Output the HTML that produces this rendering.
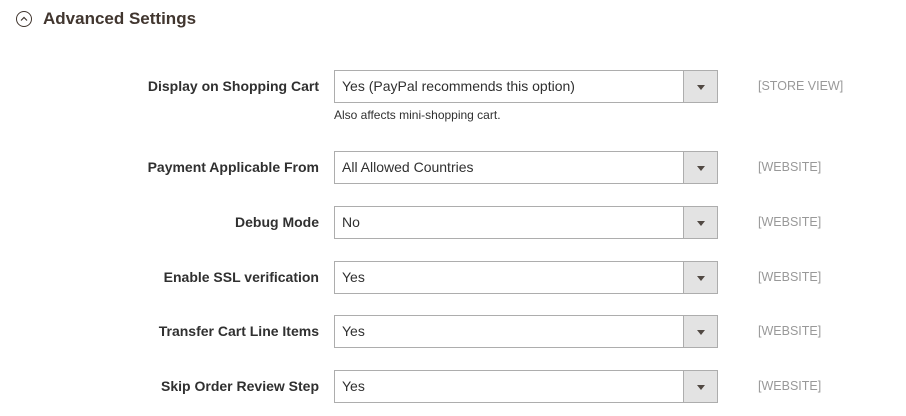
<!DOCTYPE html>
<html><head><style>
body{margin:0;width:906px;height:416px;background:#fff;font-family:"Liberation Sans",sans-serif;color:#303030;position:relative;overflow:hidden}
.h{position:absolute;left:43px;top:9px;font-size:17px;font-weight:bold;color:#41362f}
.ic{position:absolute;left:16px;top:11px;width:14px;height:14px;border:1px solid #41362f;border-radius:50%}
.row{position:absolute;left:0;width:906px;height:33px}
.lab{position:absolute;right:587px;top:8px;font-size:14px;font-weight:bold;white-space:nowrap;color:#303030}
.sel{position:absolute;left:334px;top:0;width:382px;height:31px;border:1px solid #adadad;font-size:14px;line-height:31px;box-sizing:content-box}
.sel span{padding-left:7px}
.btn{position:absolute;right:0;top:0;width:33px;height:31px;background:#e3e3e3;border-left:1px solid #adadad}
.btn:after{content:"";position:absolute;left:13px;top:14px;border-left:4px solid transparent;border-right:4px solid transparent;border-top:5px solid #514943}
.sc{position:absolute;left:758px;top:9px;font-size:12.5px;color:#999}
.note{position:absolute;left:334px;top:38px;font-size:12px;color:#303030}
</style></head><body>
<div class="ic"><svg width="14" height="14" style="position:absolute;left:0;top:0"><path d="M4 8.5 L7 5.5 L10 8.5" fill="none" stroke="#41362f" stroke-width="1.2"/></svg></div>
<div class="h">Advanced Settings</div>
<div class="row" style="top:70px"><div class="lab">Display on Shopping Cart</div><div class="sel"><span>Yes (PayPal recommends this option)</span><div class="btn"></div></div><div class="sc">[STORE VIEW]</div><div class="note">Also affects mini-shopping cart.</div></div>
<div class="row" style="top:151px"><div class="lab">Payment Applicable From</div><div class="sel"><span>All Allowed Countries</span><div class="btn"></div></div><div class="sc">[WEBSITE]</div></div>
<div class="row" style="top:206px"><div class="lab">Debug Mode</div><div class="sel"><span>No</span><div class="btn"></div></div><div class="sc">[WEBSITE]</div></div>
<div class="row" style="top:261px"><div class="lab">Enable SSL verification</div><div class="sel"><span>Yes</span><div class="btn"></div></div><div class="sc">[WEBSITE]</div></div>
<div class="row" style="top:315px"><div class="lab">Transfer Cart Line Items</div><div class="sel"><span>Yes</span><div class="btn"></div></div><div class="sc">[WEBSITE]</div></div>
<div class="row" style="top:370px"><div class="lab">Skip Order Review Step</div><div class="sel"><span>Yes</span><div class="btn"></div></div><div class="sc">[WEBSITE]</div></div>
</body></html>
